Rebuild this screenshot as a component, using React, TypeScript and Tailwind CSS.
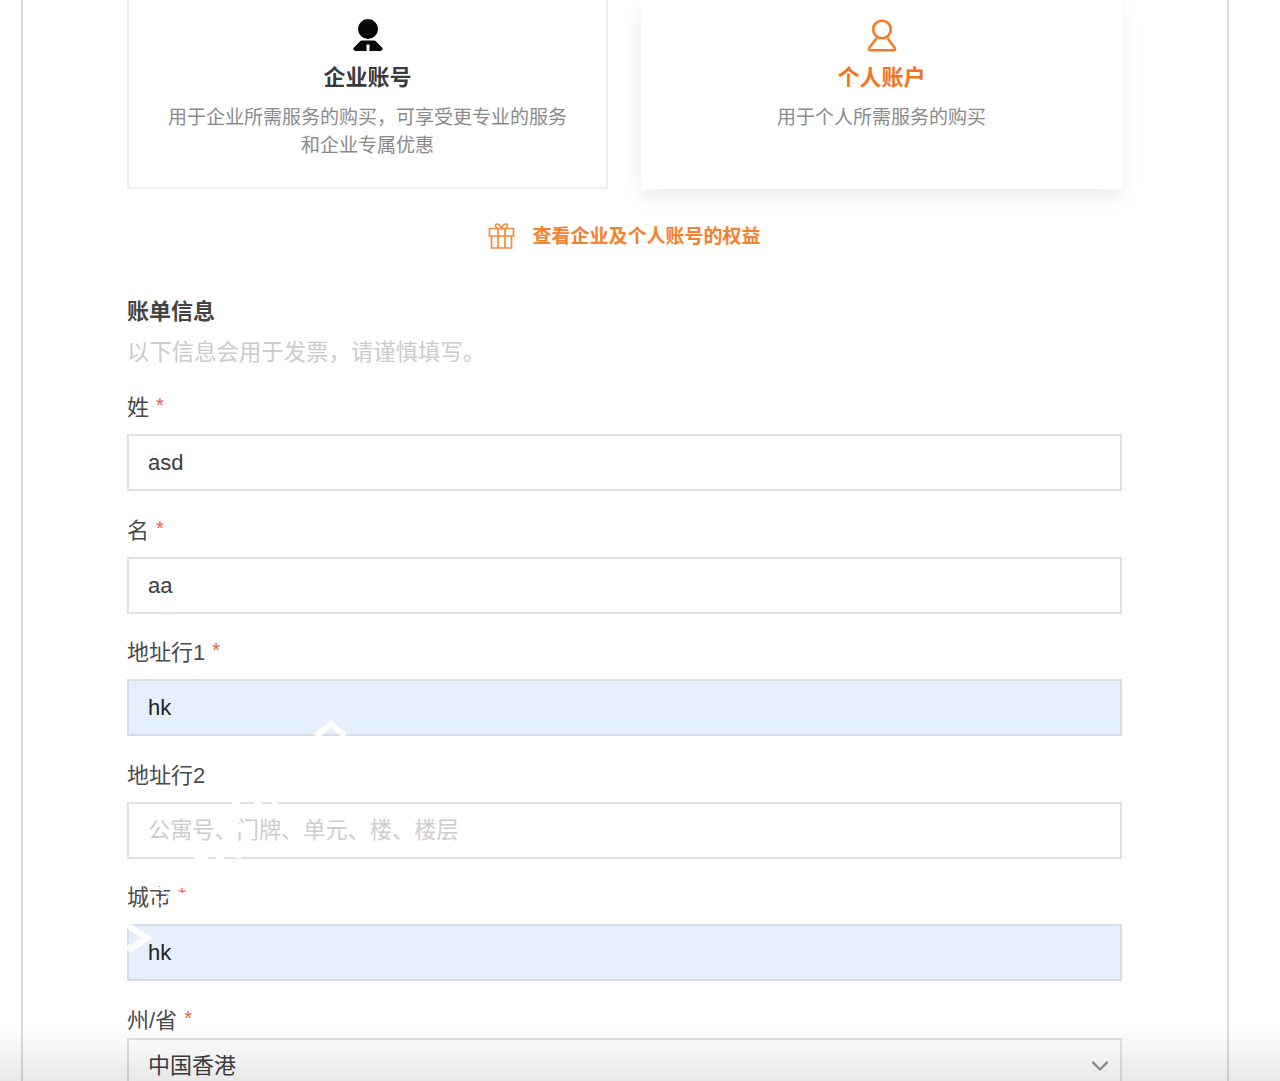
import React from 'react';
import { ChevronDown } from 'lucide-react';

const font = "[font-family:'Liberation_Sans','Noto_Sans_CJK_SC',sans-serif]";

const Required = () => <span className="ml-[7px] inline-block -translate-y-[3px] text-[20px] text-[#f0594c]">*</span>;

const BusinessIcon = () => (
  <svg width="30" height="34" viewBox="0 0 30 34" fill="#050505">
    <circle cx="15" cy="11" r="10" />
    <path d="M9 22.500h12c1 0 1.600.4 2.200 1L29 29.500c1.300 1.800.4 3.500-2 3.500H16.500V26.500h-3V33H3c-2.400 0-3.300-1.700-2-3.500L6.800 23.500c.6-.6 1.200-1 2.200-1z" />
  </svg>
);

const PersonalIcon = () => (
  <svg width="30" height="34" viewBox="0 0 30 34" fill="none" stroke="#f57a24" strokeWidth="2.6">
    <circle cx="15" cy="11.500" r="8.800" />
    <path d="M9.500 20.500L2.400 29.500C1.400 31 2 32.200 3.800 32.200h22.400c1.800 0 2.400-1.200 1.400-2.700L20.500 20.500" strokeLinejoin="round" />
  </svg>
);

const GiftIcon = () => (
  <svg width="27" height="27" viewBox="0 0 27 27" fill="none" stroke="#f58a3c" strokeWidth="1.700">
    <path d="M1.500 5.500h24v7.500h-24zM3.500 13v12h20V13M10 5.500V25M17 5.500V25" />
    <path d="M10 5.500C7 4.500 6.500 1 9 1c2 0 3.500 2 4.500 4.500C14.500 3 16 1 18 1c2.500 0 2 3.500-1 4.500" />
  </svg>
);

const Field = ({ label, required, value, placeholder, filled }: {
  label: string;
  required?: boolean;
  value?: string;
  placeholder?: string;
  filled?: boolean;
}) => (
  <div className="mb-[24.5px]">
    <div className="mb-[14px] h-[27px] text-[22px] leading-[29px] text-[#4a4a4a]">
      {label}
      {required && <Required />}
    </div>
    <div
      className={`flex h-[57px] items-center border-2 px-[19px] text-[22px] ${
        filled ? 'border-[#d8dde5] bg-[#e6effd] text-[#222222]' : 'border-[#e0e0e0] bg-white text-[#3d3d3d]'
      }`}
    >
      {value ?? <span className="pt-[2px] text-[22.2px] text-[#cdcdcd]">{placeholder}</span>}
    </div>
  </div>
);

export default function App() {
  return (
    <div className={`relative h-[1081px] w-[1280px] overflow-hidden bg-white ${font}`}>
      <div className="ml-[21px] h-full w-[1208px] border-x-2 border-[#dcdcdc] pl-[104px] pr-[105px]">
        <div className="grid grid-cols-2 gap-[33px]">
          <div className="flex h-[189px] flex-col items-center border-x-2 border-b-2 border-[#eeeeee] pt-[18px] text-center">
            <BusinessIcon />
            <div className="mt-[11px] text-[22px] font-bold leading-[30px] text-[#3a3a3a]">企业账号</div>
            <p className="mt-[11px] w-[410px] text-[19px] leading-[28px] text-[#8a8a8a]">
              用于企业所需服务的购买，可享受更专业的服务和企业专属优惠
            </p>
          </div>
          <div className="flex h-[189px] flex-col items-center bg-white pt-[18px] text-center shadow-[0_8px_22px_rgba(0,0,0,0.08)]">
            <PersonalIcon />
            <div className="mt-[11px] text-[22px] font-bold leading-[30px] text-[#f57320]">个人账户</div>
            <p className="mt-[11px] text-[19px] leading-[28px] text-[#8a8a8a]">用于个人所需服务的购买</p>
          </div>
        </div>

        <div className="mt-[32px] flex h-[30px] items-center justify-center">
          <GiftIcon />
          <span className="ml-[17px] pt-[2px] text-[19px] font-bold text-[#f5802e]">查看企业及个人账号的权益</span>
        </div>

        <h2 className="mt-[46px] text-[22px] font-bold leading-[30px] text-[#444444]">账单信息</h2>
        <p className="mt-[11px] mb-[25px] text-[22.4px] leading-[30px] text-[#cbcbcb]">以下信息会用于发票，请谨慎填写。</p>

        <Field label="姓" required value="asd" />
        <Field label="名" required value="aa" />
        <Field label="地址行1" required value="hk" filled />
        <Field label="地址行2" placeholder="公寓号、门牌、单元、楼、楼层" />
        <Field label="城市" required value="hk" filled />

        <div className="h-[27px] text-[22px] leading-[29px] text-[#4a4a4a]">
          州/省
          <Required />
        </div>
        <div className="mt-[5px] flex h-[57px] items-center justify-between border-2 border-[#e0e0e0] pl-[19px] pr-[6px] text-[22px] text-[#3d3d3d]">
          <span className="pb-[2px]">中国香港</span>
          <ChevronDown size={28} strokeWidth={2} className="text-[#8f8f8f]" />
        </div>
      </div>

      {/* watermark fragments left over the form */}
      <svg className="absolute left-0 top-0" width="400" height="960" viewBox="0 0 400 960" fill="none" stroke="#ffffff" strokeWidth="6">
        <path d="M316 736l15-12 14 12" />
        <path d="M232 802h8M254 802h8M272 802h6M240 824v8M240 846l-2 12M194 857h14M216 857h8" />
        <path d="M152 886l12 4M148 898l8-3M160 903l8-7M176 892l8 3M178 899l6-4" strokeWidth="3" />
        <path d="M127 925l20 13-16 11-4-3" />
      </svg>

      <div className="pointer-events-none absolute inset-x-0 bottom-0 h-[55px] bg-gradient-to-b from-transparent to-[#000000]/[0.09]" />
    </div>
  );
}
